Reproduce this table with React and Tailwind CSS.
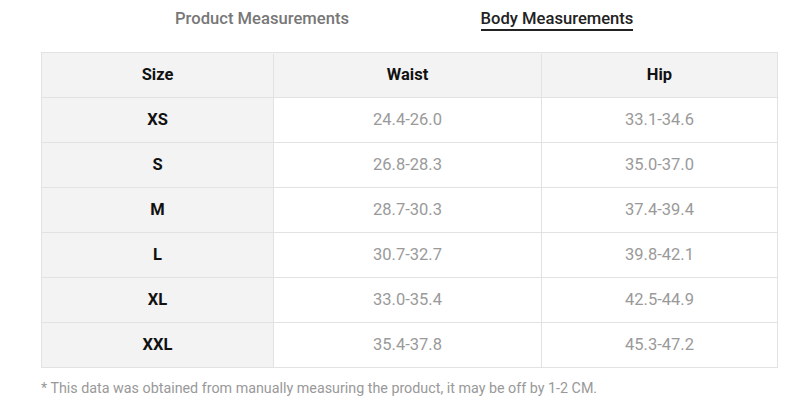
import React from 'react';

const rows = [
  { size: 'XS', waist: '24.4-26.0', hip: '33.1-34.6' },
  { size: 'S', waist: '26.8-28.3', hip: '35.0-37.0' },
  { size: 'M', waist: '28.7-30.3', hip: '37.4-39.4' },
  { size: 'L', waist: '30.7-32.7', hip: '39.8-42.1' },
  { size: 'XL', waist: '33.0-35.4', hip: '42.5-44.9' },
  { size: 'XXL', waist: '35.4-37.8', hip: '45.3-47.2' },
];

const App = () => {
  return (
    <div className="w-[798px] h-[418px] bg-white font-['Roboto',sans-serif] pl-[41px] pr-[20px]">
      <div className="flex justify-center pt-[9px]">
        <div className="w-[295px] flex justify-center">
          <span className="text-[16.6px] leading-[20px] font-medium text-[#777] pb-[2px]">Product Measurements</span>
        </div>
        <div className="w-[295px] flex justify-center">
          <span className="text-[16.6px] leading-[20px] font-medium text-[#222] border-b-2 border-[#222]">Body Measurements</span>
        </div>
      </div>

      <div className="mt-[21px] border-x border-t border-[#e2e2e2]">
        <div className="flex h-[45px] pt-[1px] bg-[#f3f3f3] border-b border-[#e2e2e2] text-[16.5px] font-bold text-[#111]">
          <div className="w-[232px] flex items-center justify-center border-r border-[#e2e2e2]">Size</div>
          <div className="w-[268px] flex items-center justify-center border-r border-[#e2e2e2]">Waist</div>
          <div className="flex-1 flex items-center justify-center">Hip</div>
        </div>
        {rows.map((row) => (
          <div key={row.size} className="flex h-[45px] text-[16.5px] border-b border-[#e2e2e2]">
            <div className="w-[232px] flex items-center justify-center pt-[1px] bg-[#f3f3f3] border-r border-[#e2e2e2] font-bold text-[#111]">
              {row.size}
            </div>
            <div className="w-[268px] flex items-center justify-center pt-[1px] border-r border-[#e2e2e2] text-[#9a9a9a]">
              {row.waist}
            </div>
            <div className="flex-1 flex items-center justify-center pt-[1px] text-[#9a9a9a]">{row.hip}</div>
          </div>
        ))}
      </div>

      <p className="mt-[10px] text-[14.3px] leading-[20px] text-[#999]">
        * This data was obtained from manually measuring the product, it may be off by 1-2 CM.
      </p>
    </div>
  );
};

export default App;
